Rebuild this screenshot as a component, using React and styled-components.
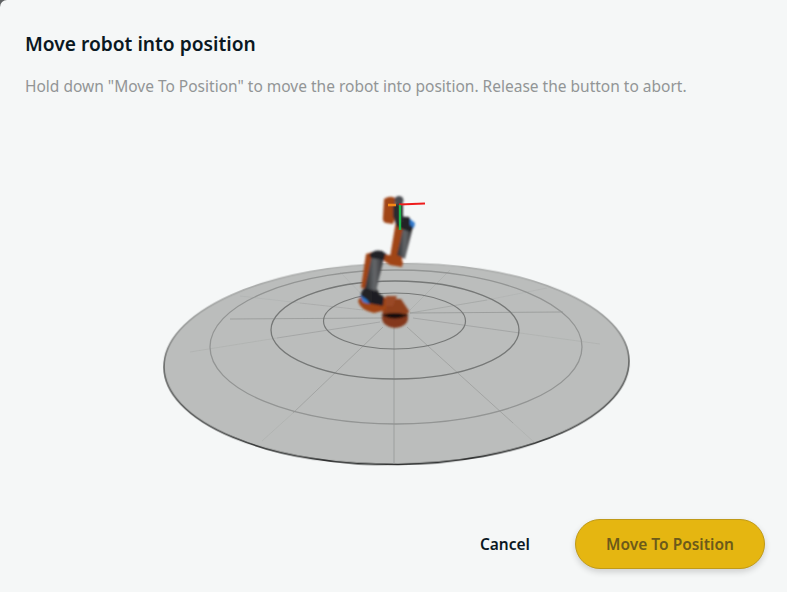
import React from "react";
import styled, { createGlobalStyle } from "styled-components";

const Global = createGlobalStyle`
  html, body {
    margin: 0;
    height: 100%;
    background: #f5f7f7;
    font-family: "Noto Sans", sans-serif;
  }
  #root { height: 100%; }
`;

const Backdrop = styled.div`
  width: 787px;
  height: 592px;
  background: linear-gradient(135deg, #5f6264 0 6px, #f5f7f7 6px);
`;

const Dialog = styled.div`
  box-sizing: border-box;
  width: 787px;
  height: 592px;
  padding: 32px 22px 23px 25px;
  display: flex;
  flex-direction: column;
  background: #f5f7f7;
  border-radius: 7px 2px 0 0;
  overflow: hidden;
`;

const Title = styled.h2`
  margin: 0;
  font-size: 19.2px;
  line-height: 24px;
  font-weight: 600;
  color: #0a1822;
`;

const Description = styled.p`
  margin: 20px 0 0;
  font-size: 15.5px;
  line-height: 20px;
  font-weight: 400;
  color: #929596;
`;

const Viewport = styled.div`
  flex: 1;
  display: flex;
  align-items: flex-start;
  justify-content: center;
  margin: 0 -22px 0 -25px;
  padding-top: 89px;
`;

const Scene = styled.svg`
  display: block;
  width: 787px;
  height: 290px;
  flex: none;
`;

const Footer = styled.div`
  display: flex;
  justify-content: flex-end;
  align-items: center;
  gap: 45px;
`;

const TextButton = styled.button`
  border: 0;
  padding: 0;
  background: none;
  font: 600 15.5px/20px "Noto Sans", sans-serif;
  color: #0a1822;
`;

const PrimaryButton = styled.button`
  box-sizing: border-box;
  width: 190px;
  height: 50px;
  border: 1px solid #c09a18;
  border-radius: 25px;
  background: #e5b611;
  box-shadow: 0 3px 6px rgba(0, 0, 0, 0.16);
  font: 600 15.5px/20px "Noto Sans", sans-serif;
  color: #6c5a1a;
`;

// [x1, y1, x2, y2, opacity] in page coordinates, fading out towards the rim
const spokes = [
  [394, 322, 394, 465, 0.85],
  [383, 327, 293, 413, 0.7],
  [293, 413, 262, 441, 0.25],
  [407, 327, 513, 423, 0.7],
  [513, 423, 535, 443, 0.25],
  [380, 322, 277, 338, 0.65],
  [277, 338, 190, 352, 0.25],
  [413, 318, 520, 333, 0.65],
  [520, 333, 600, 344, 0.25],
  [363, 310, 300, 303, 0.45],
  [300, 303, 240, 296, 0.2],
  [410, 313, 487, 300, 0.55],
  [487, 300, 547, 288, 0.2],
  [410, 310, 450, 270, 0.3],
  [372, 305, 340, 272, 0.2],
  [230, 319, 383, 318, 0.85],
  [410, 313, 563, 312, 0.85],
];

function RobotScene() {
  // viewBox keeps the coordinates below equal to page coordinates
  return (
    <Scene viewBox="0 185 787 290">
      <defs>
        <filter id="soft" x="-10%" y="-10%" width="120%" height="120%">
          <feGaussianBlur stdDeviation="0.6" />
        </filter>
        <filter id="softer" x="-20%" y="-20%" width="140%" height="140%">
          <feGaussianBlur stdDeviation="0.9" />
        </filter>
        <filter id="crisp" x="-20%" y="-20%" width="140%" height="140%">
          <feGaussianBlur stdDeviation="0.5" />
        </filter>
        <linearGradient id="rim" gradientUnits="userSpaceOnUse" x1="0" y1="263" x2="0" y2="465">
          <stop offset="0" stopColor="#b2b4b3" />
          <stop offset="0.3" stopColor="#9a9c9b" />
          <stop offset="0.5" stopColor="#6c6e6d" />
          <stop offset="1" stopColor="#2a2c2c" />
        </linearGradient>
        <linearGradient id="tube" gradientUnits="objectBoundingBox" x1="0" y1="0" x2="1" y2="0">
          <stop offset="0" stopColor="#2c2d30" />
          <stop offset="0.5" stopColor="#65676a" />
          <stop offset="1" stopColor="#2e2f32" />
        </linearGradient>
        <clipPath id="disc">
          <ellipse cx="396.5" cy="364" rx="232" ry="100" />
        </clipPath>
      </defs>

      <ellipse cx="396.5" cy="364" rx="232.5" ry="100.5" fill="#bbbdbc" stroke="url(#rim)" strokeWidth="1.7" transform="rotate(-0.8 396.5 364)" filter="url(#crisp)" />
      <g filter="url(#soft)">
        <g clipPath="url(#disc)" fill="none">
          {spokes.map(([x1, y1, x2, y2, o], i) => (
            <line key={i} x1={x1} y1={y1} x2={x2} y2={y2} stroke="#989a99" strokeOpacity={o} strokeWidth="1" />
          ))}
          <ellipse cx="396" cy="347" rx="186" ry="77" stroke="#939594" strokeWidth="1.3" />
          <ellipse cx="395" cy="330" rx="124" ry="49" stroke="#767877" strokeWidth="1.3" />
          <ellipse cx="394.5" cy="321" rx="71" ry="28" stroke="#767877" strokeWidth="1.2" />
        </g>
      </g>

      <g filter="url(#softer)">
        {/* base */}
        <ellipse cx="395" cy="318" rx="13" ry="10" fill="#84391c" />
        <path d="M381 315 Q395 311 409 315 Q402 318.5 395 318.5 Q388 318.5 381 315Z" fill="#120f0e" />
        <path d="M382 314 L386 299 L401 299 L409 311 Q409 314 405 314 Q395 311 382 314Z" fill="#8f411f" />
        {/* shoulder */}
        <path d="M358 301 Q362 292 372 296 L388 298 L386 310 L374 313 Q360 310 358 301Z" fill="#a04519" />
        <path d="M386 296 L397 296 L393 306 L386 306Z" fill="#9a4826" />
        <circle cx="370" cy="295" r="9" fill="#232427" />
        <path d="M372 289 L384 297 L383 306 L372 304Z" fill="#1c1d20" />
        <path d="M360 295 L367 300 L370 304 L363 302Z" fill="#2f78cc" />
        {/* lower arm */}
        <path d="M366 254 L373 252 L368 288 L361 288Z" fill="#a04519" />
        <path d="M372 255 L384 258 L376 291 L365 288Z" fill="url(#tube)" />
        <path d="M369 255 Q374 249 382 251 L389 256 L384 260 L371 258Z" fill="#212225" />
        {/* elbow */}
        <path d="M385 255 L398 255 L403 262 L402 267 L390 265 L384 261Z" fill="#a04519" />
        {/* upper arm */}
        <path d="M396 221 L405 222 L402 260 L390 257Z" fill="#a04519" />
        <path d="M404 224 L413 227 L405 259 L397 255Z" fill="url(#tube)" />
        <path d="M394 216 L409 217 L414 226 L410 232 L397 227Z" fill="#212225" />
        <path d="M410 219 L415 223 L414 228 L410 225Z" fill="#2f78cc" />
        {/* wrist */}
        <path d="M384 199 Q390 195 395 198 L395 218 L393 224 L386 223 Q382 222 383 216Z" fill="#a04519" />
        <path d="M393 204 L403 204 L403 222 L396 224 L393 216Z" fill="#2b2c2f" />
        <circle cx="399" cy="200.5" r="4.5" fill="#4a4c50" />
      </g>
      <g filter="url(#crisp)">
        <line x1="388" y1="205" x2="396" y2="205" stroke="#f58a14" strokeWidth="2.6" />
        <line x1="399" y1="204.5" x2="425" y2="203.5" stroke="#ee1f1f" strokeWidth="1.8" />
        <line x1="400" y1="205" x2="400" y2="230" stroke="#1fb84a" strokeWidth="2.4" />
      </g>
    </Scene>
  );
}

export default function App() {
  return (
    <>
      <Global />
      <Backdrop>
        <Dialog>
          <Title>Move robot into position</Title>
          <Description>
            Hold down "Move To Position" to move the robot into position. Release the button to abort.
          </Description>
          <Viewport>
            <RobotScene />
          </Viewport>
          <Footer>
            <TextButton>Cancel</TextButton>
            <PrimaryButton>Move To Position</PrimaryButton>
          </Footer>
        </Dialog>
      </Backdrop>
    </>
  );
}
